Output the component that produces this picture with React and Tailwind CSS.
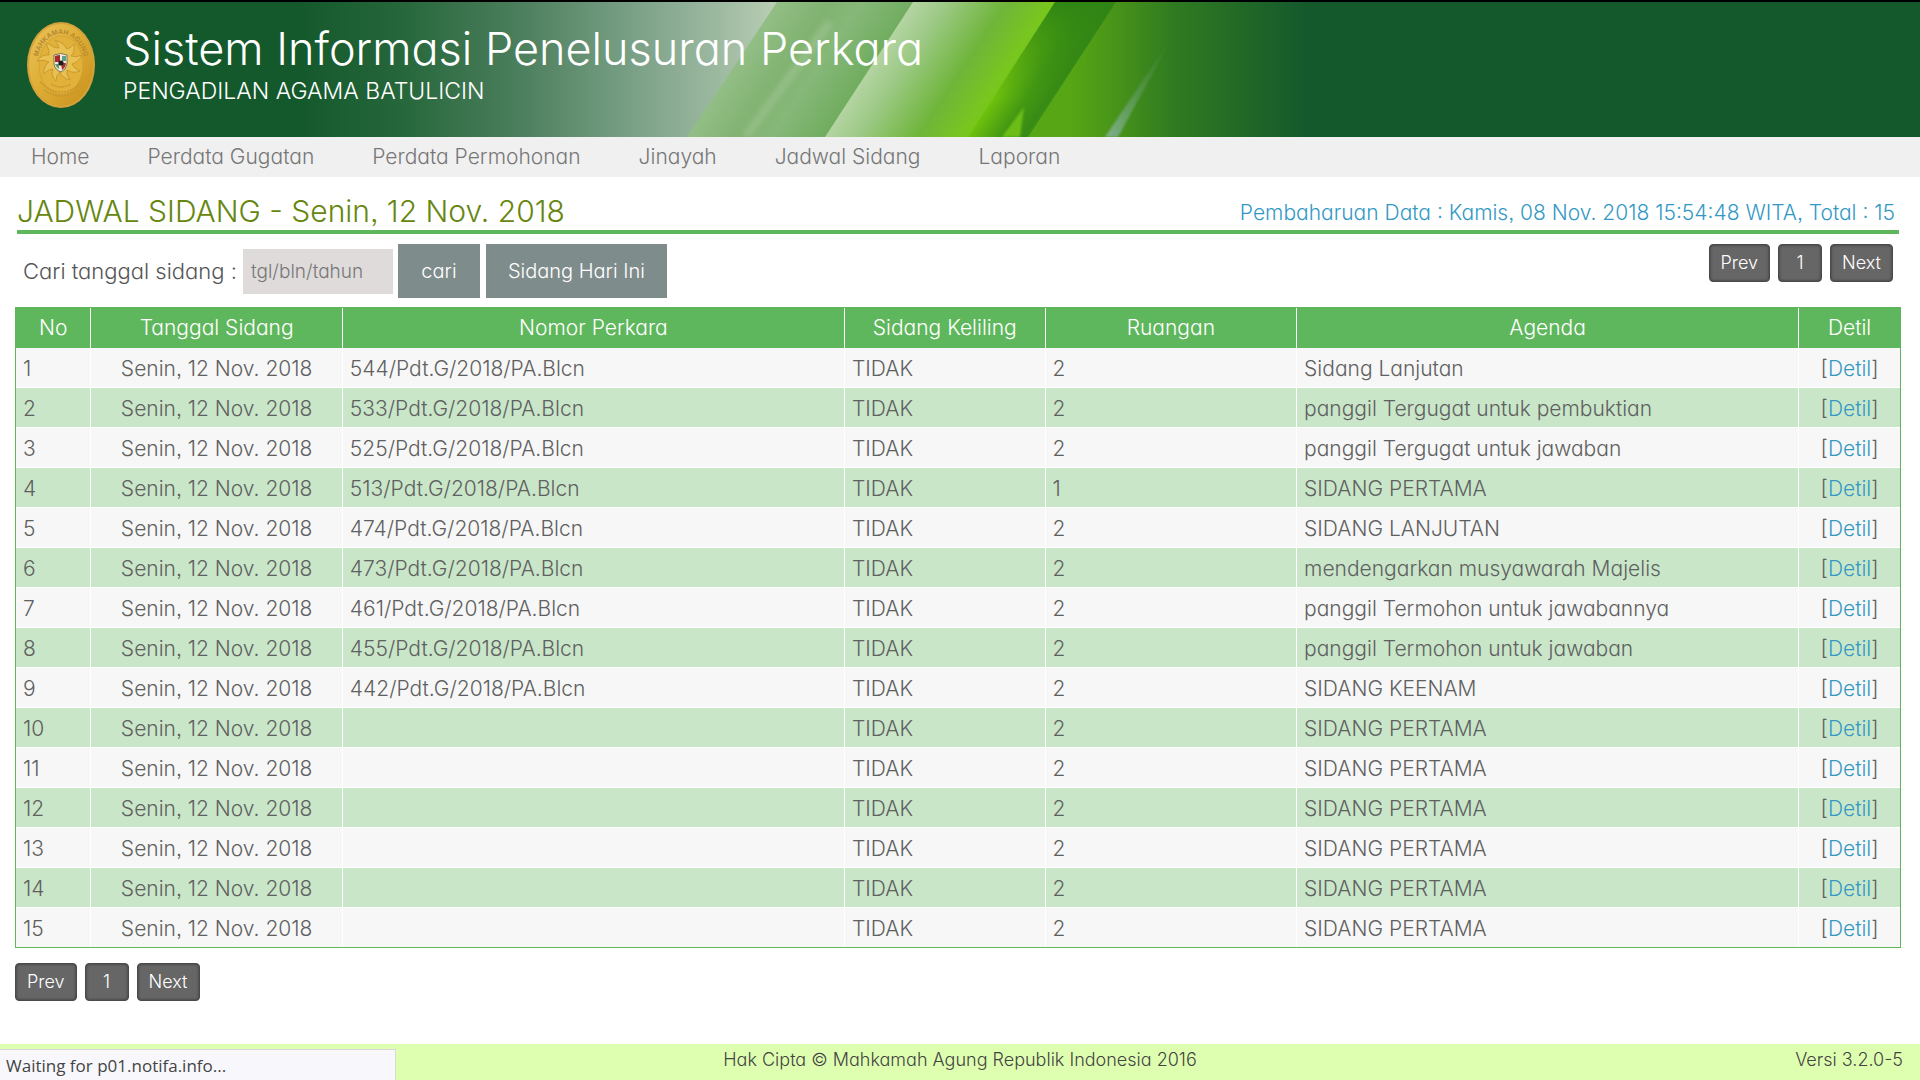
const menu = ['Home', 'Perdata Gugatan', 'Perdata Permohonan', 'Jinayah', 'Jadwal Sidang', 'Laporan'];

const columns = [
  { name: 'No', width: 'w-[4%]' },
  { name: 'Tanggal Sidang', width: 'w-[13.35%]' },
  { name: 'Nomor Perkara', width: 'w-[26.65%]' },
  { name: 'Sidang Keliling', width: 'w-[10.65%]' },
  { name: 'Ruangan', width: 'w-[13.35%]' },
  { name: 'Agenda', width: 'w-[26.65%]' },
  { name: 'Detil', width: 'w-auto' },
];

const rows = [
  ['544/Pdt.G/2018/PA.Blcn', '2', 'Sidang Lanjutan'],
  ['533/Pdt.G/2018/PA.Blcn', '2', 'panggil Tergugat untuk pembuktian'],
  ['525/Pdt.G/2018/PA.Blcn', '2', 'panggil Tergugat untuk jawaban'],
  ['513/Pdt.G/2018/PA.Blcn', '1', 'SIDANG PERTAMA'],
  ['474/Pdt.G/2018/PA.Blcn', '2', 'SIDANG LANJUTAN'],
  ['473/Pdt.G/2018/PA.Blcn', '2', 'mendengarkan musyawarah Majelis'],
  ['461/Pdt.G/2018/PA.Blcn', '2', 'panggil Termohon untuk jawabannya'],
  ['455/Pdt.G/2018/PA.Blcn', '2', 'panggil Termohon untuk jawaban'],
  ['442/Pdt.G/2018/PA.Blcn', '2', 'SIDANG KEENAM'],
  ['', '2', 'SIDANG PERTAMA'],
  ['', '2', 'SIDANG PERTAMA'],
  ['', '2', 'SIDANG PERTAMA'],
  ['', '2', 'SIDANG PERTAMA'],
  ['', '2', 'SIDANG PERTAMA'],
  ['', '2', 'SIDANG PERTAMA'],
];

const Seal = () => (
  <svg viewBox="0 0 68 86" className="w-[68px] h-[86px] shrink-0" role="img" aria-label="Mahkamah Agung">
    <defs>
      <linearGradient id="gold" x1="0" y1="0" x2="1" y2="1">
        <stop offset="0" stopColor="#e9c35c" />
        <stop offset="0.45" stopColor="#dfae35" />
        <stop offset="1" stopColor="#c8901c" />
      </linearGradient>
      <path id="sealTop" d="M10 44 A24 32 0 0 1 58 44" />
    </defs>
    <ellipse cx="34" cy="43" rx="34" ry="43" fill="#d3a23a" />
    <ellipse cx="34" cy="43" rx="32" ry="41" fill="url(#gold)" />
    <ellipse cx="34" cy="43" rx="22" ry="29" fill="#e2b13a" stroke="#c99a30" strokeWidth="0.6" />
    <text fontSize="7" fill="#b58a32" fontFamily="Liberation Sans" fontWeight="bold">
      <textPath href="#sealTop" startOffset="50%" textAnchor="middle">MAHKAMAH AGUNG</textPath>
    </text>
    <path
      d="M22 22q6 5 10 4q-1-5-4-8q9 3 12 9q4-1 7-5q1 8-3 12q5 2 11-1q-4 8-10 9q2 5 8 7q-7 3-13-1q-1 5 3 10q-8-2-10-8q-4 3-4 9q-6-6-3-12q-5 0-9 5q-1-8 5-12q-5-3-12-1q5-7 12-6q1-5-3-11z"
      fill="#e9c052"
      stroke="#c3932b"
      strokeWidth="0.8"
    />
    <path d="M13 60q21 20 42 0M17 68q17 12 34 0M24 62q10 6 20 0" fill="none" stroke="#c4962f" strokeWidth="1.4" strokeDasharray="2 1" />
    <path d="M27 33q7-3 13 0v9q-1 6-6 8-6-2-7-8z" fill="#f0e8d8" stroke="#5f5a45" strokeWidth="0.8" />
    <path d="M28 34q3-1 5-1v7h-5z" fill="#a82a2a" />
    <path d="M34 41h5q0 4-4 7z" fill="#a8332f" />
    <path d="M35 34h4v5h-4z" fill="#5ba08e" />
    <path d="M28 42h4v5q-3-2-4-5z" fill="#5d9a67" />
    <circle cx="34" cy="41" r="2.6" fill="#1d1d1a" />
  </svg>
);

const BannerArt = () => (
  <svg viewBox="0 0 1920 135" preserveAspectRatio="xMinYMin slice" className="absolute inset-0 w-full h-full" aria-hidden="true">
    <defs>
      <linearGradient id="mist" gradientUnits="userSpaceOnUse" x1="300" y1="0" x2="790" y2="0">
        <stop offset="0" stopColor="#14592c" />
        <stop offset="0.2" stopColor="#25663a" />
        <stop offset="0.45" stopColor="#4c7f5d" />
        <stop offset="0.7" stopColor="#7ea389" />
        <stop offset="0.85" stopColor="#9cb9a0" />
        <stop offset="1" stopColor="#bfd2b9" />
      </linearGradient>
      <linearGradient id="pale" gradientUnits="userSpaceOnUse" x1="755" y1="35" x2="860" y2="105">
        <stop offset="0" stopColor="#92be85" />
        <stop offset="0.35" stopColor="#80b270" />
        <stop offset="0.55" stopColor="#86b879" />
        <stop offset="1" stopColor="#6aa957" />
      </linearGradient>
      <linearGradient id="leaf" gradientUnits="userSpaceOnUse" x1="870" y1="66" x2="988" y2="144">
        <stop offset="0" stopColor="#b4d4a2" />
        <stop offset="0.2" stopColor="#9cc985" />
        <stop offset="0.55" stopColor="#6fb53a" />
        <stop offset="0.8" stopColor="#78c61f" />
        <stop offset="1" stopColor="#74c714" />
      </linearGradient>
      <linearGradient id="deep" gradientUnits="userSpaceOnUse" x1="1012" y1="67" x2="1068" y2="104">
        <stop offset="0" stopColor="#70c20c" />
        <stop offset="0.4" stopColor="#459a12" />
        <stop offset="0.7" stopColor="#388b14" />
        <stop offset="1" stopColor="#429613" />
      </linearGradient>
      <linearGradient id="deepTop" x1="0" y1="0" x2="0" y2="1">
        <stop offset="0" stopColor="#2f8414" />
        <stop offset="0.7" stopColor="#2f8414" stopOpacity="0" />
      </linearGradient>
      <linearGradient id="fade" gradientUnits="userSpaceOnUse" x1="1070" y1="0" x2="1320" y2="0">
        <stop offset="0" stopColor="#56a615" />
        <stop offset="0.15" stopColor="#4b9718" />
        <stop offset="0.4" stopColor="#317c20" />
        <stop offset="0.65" stopColor="#246b26" />
        <stop offset="0.95" stopColor="#14592c" />
      </linearGradient>
      <linearGradient id="streak" x1="0" y1="1" x2="1" y2="0">
        <stop offset="0" stopColor="#7fb08c" />
        <stop offset="1" stopColor="#4b8a45" stopOpacity="0" />
      </linearGradient>
      <filter id="soft"><feGaussianBlur stdDeviation="3" /></filter>
      <filter id="fine"><feGaussianBlur stdDeviation="1" /></filter>
    </defs>
    <rect width="1920" height="135" fill="#14592c" />
    <rect x="300" width="600" height="135" fill="url(#mist)" />
    <path d="M777 0H925L835 135H687z" fill="url(#pale)" />
    <path d="M913 0H1070L1000 135H825z" fill="url(#leaf)" />
    <path d="M1055 0H1125L1040 135H968z" fill="url(#deep)" />
    <path d="M1055 0H1125L1040 135H968z" fill="url(#deepTop)" />
    <path d="M1116 0H1330V135H1028z" fill="url(#fade)" />
    <path d="M830 20L745 135" stroke="#b4d3aa" strokeWidth="8" opacity="0.4" filter="url(#soft)" />
    <path d="M1024 105L1002 135H1020z" fill="#6cbd18" filter="url(#fine)" />
    <path d="M1174 32L1105 135H1118z" fill="url(#streak)" filter="url(#fine)" />
  </svg>
);

const Pager = () => (
  <nav aria-label="Halaman" className="flex gap-2 text-[18px] leading-6 text-white">
    {['Prev', '1', 'Next'].map((label) => (
      <button
        key={label}
        type="button"
        className="h-[38px] min-w-11 px-[11px] rounded bg-[#666] border border-[#4a4a4a] shadow-[inset_0_0_3px_#333]"
      >
        {label}
      </button>
    ))}
  </nav>
);

export default function App() {
  return (
    <div className="min-h-screen flex flex-col bg-white font-light text-[#555] font-['Inter','Century_Gothic',sans-serif] [font-feature-settings:'cv11','ss03']">
      <header className="relative h-[137px] border-t-2 border-black bg-[#14592c] text-white">
        <BannerArt />
        <div className="relative flex gap-7 pl-[27px] pt-5">
          <Seal />
          <div>
            <h1 className="text-[45px] leading-[54px]">Sistem Informasi Penelusuran Perkara</h1>
            <p className="text-[23px] leading-[30px]">PENGADILAN AGAMA BATULICIN</p>
          </div>
        </div>
      </header>

      <nav className="flex h-10 items-center gap-[58px] bg-[#f0f0f0] px-[31px] text-[21px] text-[#777]">
        {menu.map((item) => (
          <a key={item} href="#">{item}</a>
        ))}
      </nav>

      <main className="flex-1 pl-[15px] pr-[19px] pt-4">
        <div className="mx-[2px] flex items-end justify-between border-b-4 border-[#5fb75d] pr-1">
          <h2 className="text-[30px] leading-[37px] text-[#66860f]">JADWAL SIDANG - Senin, 12 Nov. 2018</h2>
          <p className="text-[21px] leading-[34px] text-[#3399c4]">
            Pembaharuan Data : Kamis, 08 Nov. 2018 15:54:48 WITA, Total : 15
          </p>
        </div>

        <div className="flex items-start justify-between pt-[10px] pb-[9px] px-2">
          <form className="flex items-center text-[20px]">
            <label htmlFor="tanggal" className="text-[22px]">Cari tanggal sidang :</label>
            <input
              id="tanggal"
              type="text"
              placeholder="tgl/bln/tahun"
              className="ml-[6px] h-[45px] w-[150px] bg-[#dfdbdb] px-2 text-[19px] placeholder:text-[#777]"
            />
            <button type="button" className="ml-[5px] h-[54px] w-[82px] bg-[#7f8c8c] text-white">cari</button>
            <button type="button" className="ml-[6px] h-[54px] w-[181px] bg-[#7f8c8c] text-white">Sidang Hari Ini</button>
          </form>
          <Pager />
        </div>

        <div className="border border-[#5fb75d]">
          <table className="w-full table-fixed border-separate border-spacing-0 text-[21px] leading-6">
            <thead>
              <tr className="h-10 bg-[#5fb75d] text-white">
                {columns.map((col) => (
                  <th key={col.name} className={`${col.width} border-r border-white p-0 font-light last:border-r-0`}>
                    {col.name}
                  </th>
                ))}
              </tr>
            </thead>
            <tbody className="text-[#606060] [&_td]:pt-[2px] [&_td]:border-b [&_td]:border-r [&_td]:border-white [&_td:last-child]:border-r-0 [&_tr:last-child_td]:border-b-0">
              {rows.map(([perkara, ruangan, agenda], i) => (
                <tr key={i} className="h-10 bg-[#f7f7f7] even:bg-[#c9e6c9] last:h-[39px]">
                  <td className="px-[7px]">{i + 1}</td>
                  <td className="text-center">Senin, 12 Nov. 2018</td>
                  <td className="px-[7px]">{perkara}</td>
                  <td className="px-[7px]">TIDAK</td>
                  <td className="px-[7px]">{ruangan}</td>
                  <td className="px-[7px]">{agenda}</td>
                  <td className="text-center">
                    [<a href="#" className="text-[#3399c4]">Detil</a>]
                  </td>
                </tr>
              ))}
            </tbody>
          </table>
        </div>

        <div className="py-[15px]">
          <Pager />
        </div>
      </main>

      <footer className="grid h-9 grid-cols-3 bg-[#dfffb0] px-[17px] text-[18px] leading-8 text-[#444]">
        <p className="col-start-2 text-center">Hak Cipta © Mahkamah Agung Republik Indonesia 2016</p>
        <p className="text-right">Versi 3.2.0-5</p>
      </footer>

      <div className="fixed bottom-0 left-0 h-[31px] w-[396px] border-t border-r border-[#d8d8dc] bg-[#f8f8fc] px-[6px] font-['Open_Sans',sans-serif] text-[17px] font-normal leading-8 text-[#444]">
        Waiting for p01.notifa.info...
      </div>
    </div>
  );
}
